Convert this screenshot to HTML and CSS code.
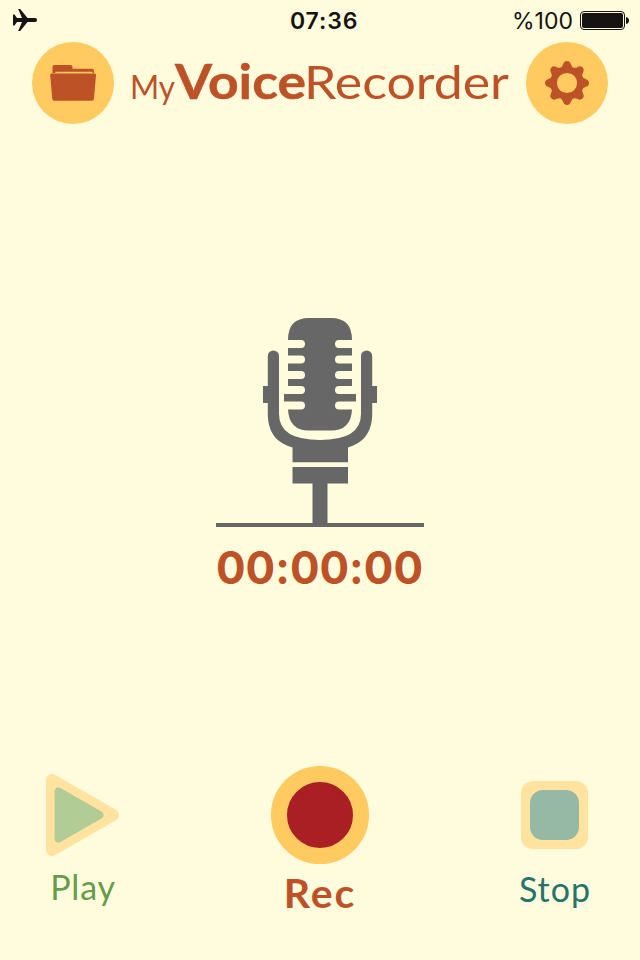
FILE: index.html
```
<!DOCTYPE html>
<html lang="en">
<head>
    <meta charset="UTF-8">
    <title>MyVoiceRecorder</title>
    <link rel="stylesheet" href="styles.css">
</head>
<body>
<div class="app">
    <div class="status">
        <svg class="plane" width="26" height="24" viewBox="0 0 26 24">
            <path d="M1 6.500H2.500L5 10H10L6.200 1H8.200L15.500 10H23Q25 10.200 25 12Q25 13.800 23 14H15.500L8.200 23H6.200L10 14H5L2.500 17.500H1Z"/>
        </svg>
        <span class="time">07:36</span>
        <span class="percent">%100</span>
        <svg class="battery" width="50" height="20" viewBox="0 0 50 20">
            <rect class="shell" x=".5" y=".5" width="44" height="18" rx="3.5"/>
            <rect x="2" y="2" width="41" height="15" rx="2"/>
            <path d="M46 6Q49 6.5 49 9.5Q49 12.5 46 13Z"/>
        </svg>
    </div>
    <div class="header">
        <div class="round">
            <svg width="82" height="82" viewBox="0 0 82 82">
                <path d="M20.500 30.500V25Q20.500 23 22.500 23H38.500Q40.500 23 40.500 25V26.800H60Q62 26.800 62 29V31H60.500V29.800H23.500V31H20.500Z"/>
                <path d="M19.300 31.500H62.800Q64.200 31.500 64 33.200L61.900 57Q61.700 58.700 60 58.700H22Q20.500 58.700 20.300 57L18.200 33.200Q18 31.500 19.300 31.500Z"/>
            </svg>
        </div>
        <svg class="logo" width="380" height="56" viewBox="0 0 380 56">
            <text class="my" x="0" y="42.500" textLength="45" lengthAdjust="spacingAndGlyphs">My</text>
            <text class="voice" x="45" y="42.500" textLength="131" lengthAdjust="spacingAndGlyphs">Voice</text>
            <text class="recorder" x="174" y="42.500" textLength="205" lengthAdjust="spacingAndGlyphs">Recorder</text>
        </svg>
        <div class="round">
            <svg width="82" height="82" viewBox="-41 -41 82 82">
                <defs>
                    <path id="tooth" d="M-7.500 -14.500Q-4.500 -16 -3.800 -19Q-2.800 -22 0 -22Q2.800 -22 3.800 -19Q4.500 -16 7.500 -14.500L6 -12H-6Z"/>
                </defs>
                <circle class="ring" r="13"/>
                <use href="#tooth"/>
                <use href="#tooth" transform="rotate(45)"/>
                <use href="#tooth" transform="rotate(90)"/>
                <use href="#tooth" transform="rotate(135)"/>
                <use href="#tooth" transform="rotate(180)"/>
                <use href="#tooth" transform="rotate(225)"/>
                <use href="#tooth" transform="rotate(270)"/>
                <use href="#tooth" transform="rotate(315)"/>
            </svg>
        </div>
    </div>
    <div class="main">
        <svg class="mic" width="208" height="210" viewBox="0 0 208 210">
            <path d="M72 22Q72 0 93 0H115Q136 0 136 22H123A4 4 0 0 0 123 30H136V37.500H123A4 4 0 0 0 123 45.500H136V53H123A4 4 0 0 0 123 61H136V68H123A4 4 0 0 0 123 76H140V83.500H123A4 4 0 0 0 123 91.500H136Q135 112.500 115 112.500H93Q73 112.500 72 91.500H85A4 4 0 0 0 85 83.500H68V76H85A4 4 0 0 0 85 68H72V61H85A4 4 0 0 0 85 53H72V45.500H85A4 4 0 0 0 85 37.500H72V30H85A4 4 0 0 0 85 22Z"/>
            <path d="M47 68H51.800V38A5.600 5.600 0 0 1 63 38V96Q63 122 104 122T145 96V38A5.600 5.600 0 0 1 156.200 38V68H161V85H156.200V96C156 115 147 125 132 129.500V144.300H76.500V129.500C61 125 52 115 51.800 96V85H47Z"/>
            <path d="M76.500 149H132V165.500H111.500V205H208V209H0V205H96.500V165.500H76.500Z"/>
        </svg>
        <svg class="timer" width="208" height="44" viewBox="0 0 208 44">
            <text x="0" y="39" textLength="207" lengthAdjust="spacingAndGlyphs">00:00:00</text>
        </svg>
    </div>
    <div class="controls">
        <div class="btn play">
            <svg width="74" height="84" viewBox="0 0 74 84">
                <path class="pale" d="M6 7V77L67 42Z"/>
                <path class="arrow" d="M12.500 18.500V65.500L53.500 42Z"/>
            </svg>
            <span>Play</span>
        </div>
        <div class="btn rec">
            <div class="disc"></div>
            <span>Rec</span>
        </div>
        <div class="btn stop">
            <div class="square"></div>
            <span>Stop</span>
        </div>
    </div>
</div>
</body>
</html>
```
FILE: styles.css
```
* {
    margin: 0;
    padding: 0;
    box-sizing: border-box;
}

body {
    background-color: #fffbdd;
    font-family: Lato, "Open Sans", sans-serif;
}

svg {
    display: block;
    overflow: visible;
}

.app {
    display: flex;
    flex-direction: column;
    width: 640px;
    height: 960px;
}

.status {
    display: grid;
    grid-template-columns: 1fr 68px 1fr 50px;
    align-items: center;
    height: 42px;
    padding: 0 10px 1px 12px;
    font-family: Inter, sans-serif;
    font-size: 23px;
    line-height: 28px;
    color: #151412;
    fill: #151412;
}

.plane {
    margin-bottom: 2px;
}

.status .time {
    margin-left: 28px;
    width: 70px;
    font-weight: 600;
    letter-spacing: 0.9px;
}

.status .percent {
    text-align: right;
    padding-right: 7px;
}

.battery .shell {
    fill: none;
    stroke: #151412;
}

.header {
    display: flex;
    justify-content: space-between;
    height: 82px;
    padding: 0 32px;
}

.round {
    width: 82px;
    height: 82px;
    border-radius: 50%;
    background-color: #ffca60;
    fill: #bd5226;
}

.ring {
    fill: none;
    stroke: #bd5226;
    stroke-width: 5.8px;
}

.logo {
    margin-top: 14px;
    fill: #bd5226;
}

.my {
    font-size: 33px;
}

.voice {
    font-size: 48px;
    font-weight: 700;
    stroke: #bd5226;
    stroke-width: 0.5px;
}

.recorder {
    font-size: 46px;
}

.main {
    display: flex;
    flex-direction: column;
    align-items: center;
    padding-top: 194px;
}

.mic {
    fill: #676767;
}

.timer {
    margin-top: 17px;
    fill: #bd5226;
    font-family: Inter, sans-serif;
    font-size: 45px;
    font-weight: 700;
    font-feature-settings: "calt" 0;
}

.controls {
    display: flex;
    justify-content: space-between;
    margin-top: auto;
    height: 194px;
    padding: 0 46px;
}

.btn {
    display: flex;
    flex-direction: column;
    align-items: center;
    width: 100px;
    font-size: 34px;
    line-height: 40px;
}

.play {
    width: 74px;
    padding-top: 7px;
    color: #669c4b;
}

.play span {
    margin-top: 10px;
    letter-spacing: 0.8px;
}

.pale {
    fill: #ffe39f;
    stroke: #ffe39f;
    stroke-width: 12px;
    stroke-linejoin: round;
}

.arrow {
    fill: #b2cc96;
    stroke: #b2cc96;
    stroke-width: 8px;
    stroke-linejoin: round;
}

.rec {
    color: #bd5226;
    font-size: 41px;
    font-weight: 700;
}

.disc {
    width: 98px;
    height: 98px;
    border: 16px solid #ffca60;
    border-radius: 50%;
    background-color: #aa1f23;
}

.rec span {
    margin-top: 9px;
    letter-spacing: 2px;
}

.stop {
    width: 74px;
    padding-top: 15px;
    color: #26736c;
}

.square {
    width: 67px;
    height: 68px;
    margin-left: -5px;
    padding: 9px;
    border-radius: 12px;
    background-color: #ffe39f;
}

.square::before {
    content: "";
    display: block;
    height: 50px;
    border-radius: 13px;
    background-color: #95b9a5;
}

.stop span {
    margin-top: 20px;
    margin-left: -4px;
    letter-spacing: 1px;
}
```
